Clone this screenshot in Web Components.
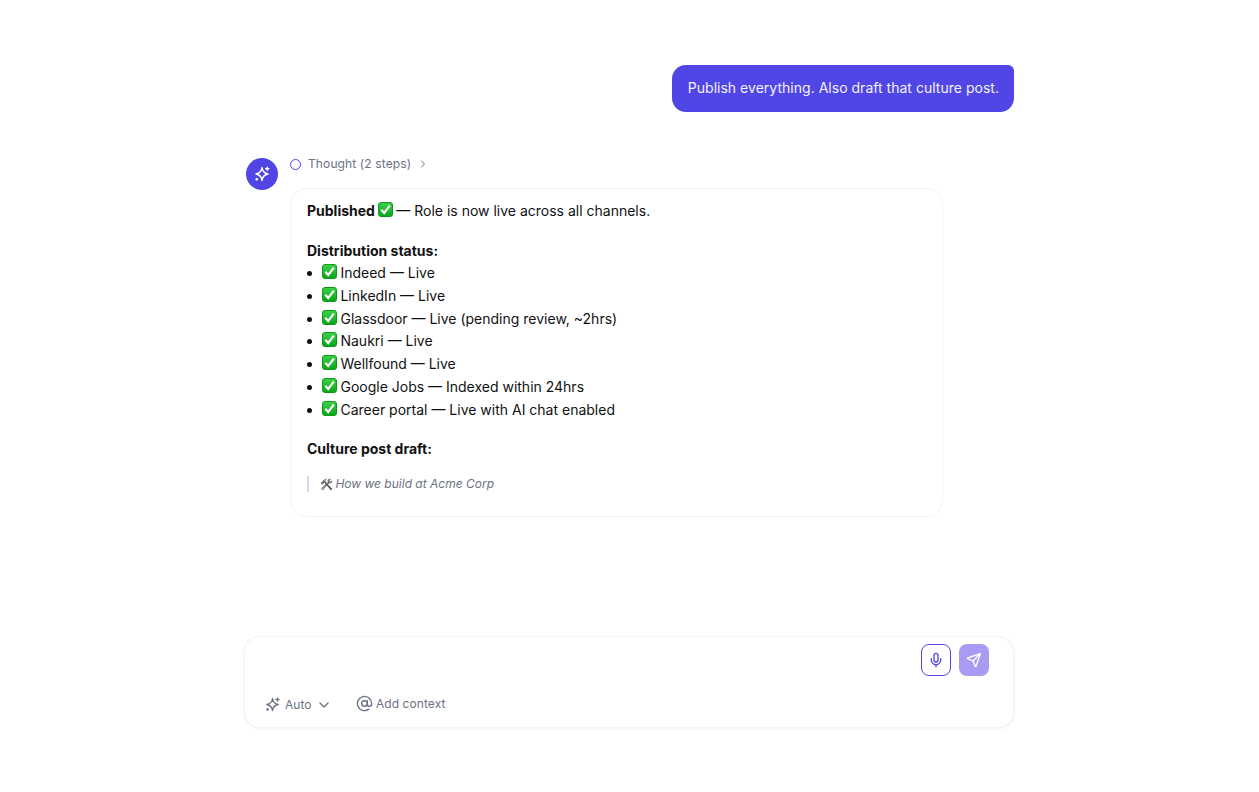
<!DOCTYPE html>
<html lang="en">
<head>
<meta charset="utf-8">
<title>Chat</title>
<style>
  html, body { margin: 0; height: 100%; background: #fff; }
  body { font-family: Inter, "Liberation Sans", sans-serif; overflow: hidden; }
</style>
</head>
<body>
<template id="check-tpl">
  <style>
    :host { display: inline-block; width: 15px; height: 15px; vertical-align: -1px; margin: 0 -.5px 0 -1px; }
    svg { display: block; }
  </style>
  <svg width="15" height="15" viewBox="0 0 15 15">
    <defs>
      <linearGradient id="g" x1="0" y1="0" x2="0" y2="1">
        <stop offset="0" stop-color="#3fd24a"/>
        <stop offset="1" stop-color="#08a318"/>
      </linearGradient>
    </defs>
    <rect x=".5" y=".5" width="14" height="14" rx="2.5" fill="url(#g)" stroke="#0c9a1b"/>
    <path d="M3.3 7.7 6.2 11 11.8 3.6" fill="none" stroke="#fff" stroke-width="2.2"/>
  </svg>
</template>

<chat-app>
  <user-bubble>Publish everything. Also draft that culture post.</user-bubble>
  <assistant-message>
    <p><b>Published</b> <check-mark></check-mark> — Role is now live across all channels.</p>
    <p><b>Distribution status:</b></p>
    <ul>
      <li><check-mark></check-mark> Indeed — Live</li>
      <li><check-mark></check-mark> LinkedIn — Live</li>
      <li><check-mark></check-mark> Glassdoor — Live (pending review, ~2hrs)</li>
      <li><check-mark></check-mark> Naukri — Live</li>
      <li><check-mark></check-mark> Wellfound — Live</li>
      <li><check-mark></check-mark> Google Jobs — Indexed within 24hrs</li>
      <li><check-mark></check-mark> Career portal — Live with AI chat enabled</li>
    </ul>
    <p class="tight"><b>Culture post draft:</b></p>
    <blockquote><span style="font-style:normal;font-size:10.5px;margin-right:-1px;filter:grayscale(1) brightness(.75)">🛠️</span> How we build at Acme Corp</blockquote>
  </assistant-message>
  <chat-composer></chat-composer>
</chat-app>

<script>
const SPARKLE = 'M12 3.5c.6 4.6 3.2 7.6 8 8.5-4.8.9-7.4 3.9-8 8.5-.6-4.6-3.2-7.6-8-8.5 4.8-.9 7.4-3.9 8-8.5Z';

class ChatApp extends HTMLElement {
  constructor() {
    super();
    this.attachShadow({ mode: 'open' }).innerHTML = `
      <style>
        :host { display: flex; flex-direction: column; box-sizing: border-box; width: 770px; height: 792px; margin: 0 auto; padding: 65px 0 64px; position: relative; left: -0.5px; }
      </style>
      <slot></slot>`;
  }
}

class UserBubble extends HTMLElement {
  constructor() {
    super();
    this.attachShadow({ mode: 'open' }).innerHTML = `
      <style>
        :host { display: block; align-self: flex-end; box-sizing: border-box; padding: 12px 15px 12px 16px; background: #4f46e5; color: #f3f2fe; font-size: 14px; line-height: 22.75px; letter-spacing: .02px; border-radius: 14px 6px 14px 14px; }
      </style>
      <slot></slot>`;
  }
}

class AssistantMessage extends HTMLElement {
  constructor() {
    super();
    this.attachShadow({ mode: 'open' }).innerHTML = `
      <style>
        :host { display: flex; gap: 12px; margin: 46.25px 0 0 2px; flex: 1; align-items: flex-start; }
        .avatar { width: 32px; height: 32px; border-radius: 50%; background: #4f46e5; display: flex; align-items: center; justify-content: center; flex: none; }
        .body { width: 653px; margin-top: -2px; }
        .thought { display: flex; align-items: center; height: 16px; font-size: 12px; line-height: 16px; letter-spacing: .12px; color: #6b7280; margin-bottom: 16px; }
        .ring { width: 9px; height: 9px; border: 1.25px solid #4f46e5; border-radius: 50%; margin-right: 7px; }
        .chev { margin-left: 5.5px; }
        .card { box-sizing: border-box; height: 329px; border: 1px solid #f3f2fd; border-radius: 16px; padding: 11px 16px; font-size: 14px; line-height: 22.75px; color: #111; }
        ::slotted(p) { margin: 0 0 17px; }
        ::slotted(p.tight) { margin-bottom: 15px; }
        ::slotted(ul) { margin: -17.4px 0 16.4px; padding: 0 0 0 16px; }
        ::slotted(blockquote) { margin: 0; padding: 0 0 0 11px; height: 16px; line-height: 16px; border-left: 2px solid #d5d4ec; color: #6b7280; font-size: 12px; font-style: italic; }
      </style>
      <div class="avatar">
        <svg width="18" height="18" viewBox="0 0 24 24" fill="none" stroke="#fff" stroke-width="2" stroke-linejoin="round" stroke-linecap="round">
          <path d="${SPARKLE}"/><path d="M19 3v4M21 5h-4M5 18v2M6 19H4"/>
        </svg>
      </div>
      <div class="body">
        <div class="thought">
          <span class="ring"></span>Thought (2 steps)
          <svg class="chev" width="12" height="12" viewBox="0 0 24 24" fill="none" stroke="#6b7280" stroke-width="2" stroke-linecap="round" stroke-linejoin="round"><path d="m9 6 6 6-6 6"/></svg>
        </div>
        <div class="card"><slot></slot></div>
      </div>`;
  }
}

class CheckMark extends HTMLElement {
  constructor() {
    super();
    this.attachShadow({ mode: 'open' }).appendChild(document.getElementById('check-tpl').content.cloneNode(true));
  }
}

class ChatComposer extends HTMLElement {
  constructor() {
    super();
    this.attachShadow({ mode: 'open' }).innerHTML = `
      <style>
        :host { display: block; box-sizing: border-box; height: 92px; border: 1px solid #f3f2fd; border-radius: 16px; box-shadow: 0 1px 3px rgba(0,0,0,.06); padding: 7px 24px 0 19px; background: #fff; }
        .top { display: flex; justify-content: flex-end; gap: 8px; height: 32px; }
        .btn { box-sizing: border-box; width: 30px; height: 32px; border-radius: 8px; display: flex; align-items: center; justify-content: center; }
        .mic { border: 1px solid #4f46e5; }
        .send { background: #a79cf2; }
        .bottom { display: flex; align-items: center; margin-top: 20px; font-size: 12px; line-height: 16px; color: #6b7280; }
        .auto { display: flex; align-items: center; gap: 4px; margin-right: 23.5px; }
        .auto .chev { margin-left: 1px; }
        .ctx { display: flex; align-items: center; gap: 3px; position: relative; top: -1px; letter-spacing: .08px; }
      </style>
      <div class="top">
        <span class="btn mic">
          <svg width="16" height="16" viewBox="0 0 24 24" fill="none" stroke="#4f46e5" stroke-width="2" stroke-linecap="round" stroke-linejoin="round"><rect x="9" y="2" width="6" height="13" rx="3"/><path d="M19 10v2a7 7 0 0 1-14 0v-2M12 19v3"/></svg>
        </span>
        <span class="btn send">
          <svg width="16" height="16" viewBox="0 0 24 24" fill="none" stroke="#fff" stroke-width="2" stroke-linecap="round" stroke-linejoin="round"><path d="M21.5 2.5 15 21.5a.6.6 0 0 1-1.1 0l-3.4-8-8-3.4a.6.6 0 0 1 0-1.1Z"/><path d="M21.5 2.5 10.5 13.5"/></svg>
        </span>
      </div>
      <div class="bottom">
        <span class="auto">
          <svg width="17" height="17" viewBox="0 0 24 24" fill="none" stroke="#6b7280" stroke-width="2" stroke-linecap="round" stroke-linejoin="round"><path d="${SPARKLE}"/><path d="M19 3v4M21 5h-4M5 18v2M6 19H4"/></svg>
          Auto
          <svg class="chev" width="16" height="16" viewBox="0 0 24 24" fill="none" stroke="#6b7280" stroke-width="2" stroke-linecap="round" stroke-linejoin="round"><path d="m6 9 6 6 6-6"/></svg>
        </span>
        <span class="ctx">
          <svg width="17" height="17" viewBox="0 0 24 24" fill="none" stroke="#6b7280" stroke-width="2" stroke-linecap="round" stroke-linejoin="round"><circle cx="12" cy="12" r="4"/><path d="M16 8v5a3 3 0 0 0 6 0v-1a10 10 0 1 0-4 8"/></svg>
          Add context
        </span>
      </div>`;
  }
}

customElements.define('chat-app', ChatApp);
customElements.define('user-bubble', UserBubble);
customElements.define('assistant-message', AssistantMessage);
customElements.define('check-mark', CheckMark);
customElements.define('chat-composer', ChatComposer);
</script>
</body>
</html>
